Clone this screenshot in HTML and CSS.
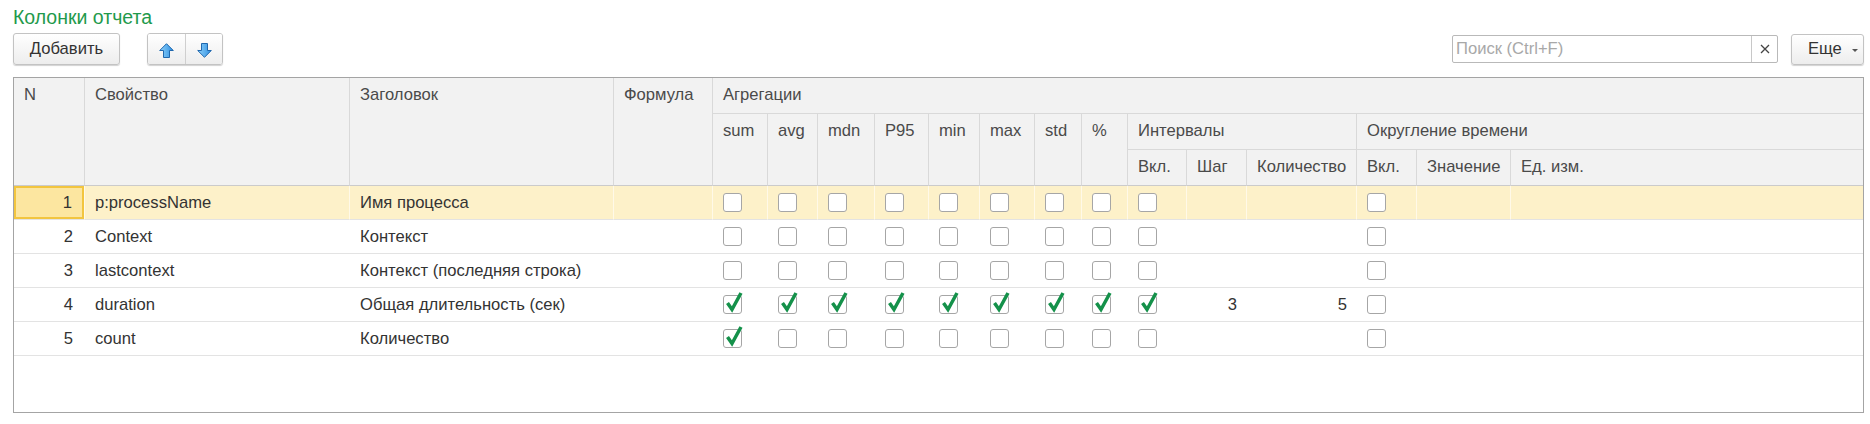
FILE: index.html
```html
<!DOCTYPE html>
<html lang="ru">
<head>
<meta charset="utf-8">
<title>Колонки отчета</title>
<link rel="stylesheet" href="styles.css">
</head>
<body>
<div class="page">
  <h1 class="title">Колонки отчета</h1>
  <div class="toolbar">
    <button class="btn btn-add" type="button">Добавить</button>
    <div class="btn-group">
      <button class="btn btn-icon" type="button">
        <svg class="arrow" width="15" height="15" viewBox="0 0 15 15"><defs><linearGradient id="gu" x1="0" y1="0" x2="1" y2="0"><stop offset="0" stop-color="#8fd2fb"/><stop offset="1" stop-color="#2f8fe0"/></linearGradient></defs><path d="M7.5 0.7 L14.3 7.5 L10.5 7.5 L10.5 14.5 L4.5 14.5 L4.5 7.5 L0.7 7.5 Z" fill="url(#gu)" stroke="#1f67ad" stroke-width="1" stroke-linejoin="miter"/></svg>
      </button>
      <button class="btn btn-icon" type="button">
        <svg class="arrow" width="15" height="15" viewBox="0 0 15 15"><defs><linearGradient id="gd" x1="0" y1="0" x2="1" y2="0"><stop offset="0" stop-color="#8fd2fb"/><stop offset="1" stop-color="#2f8fe0"/></linearGradient></defs><path d="M7.5 14.3 L14.3 7.5 L10.5 7.5 L10.5 0.5 L4.5 0.5 L4.5 7.5 L0.7 7.5 Z" fill="url(#gd)" stroke="#1f67ad" stroke-width="1" stroke-linejoin="miter"/></svg>
      </button>
    </div>
    <div class="spacer"></div>
    <div class="search">
      <span class="search-input">Поиск (Ctrl+F)</span>
      <span class="search-clear"><svg width="10" height="10" viewBox="0 0 10 10"><path d="M1 1 L9 9 M9 1 L1 9" stroke="#444" stroke-width="1.3"/></svg></span>
    </div>
    <button class="btn btn-more" type="button">Еще<span class="caret"></span></button>
  </div>

  <div class="grid">
    <table class="tbl">
      <colgroup>
        <col style="width:71px"><col style="width:265px"><col style="width:264px"><col style="width:99px">
        <col style="width:55px"><col style="width:50px"><col style="width:57px"><col style="width:54px">
        <col style="width:51px"><col style="width:55px"><col style="width:47px"><col style="width:46px">
        <col style="width:59px"><col style="width:60px"><col style="width:110px">
        <col style="width:60px"><col style="width:94px"><col style="width:352px">
      </colgroup>
      <thead>
        <tr>
          <th rowspan="3">N</th>
          <th rowspan="3">Свойство</th>
          <th rowspan="3">Заголовок</th>
          <th rowspan="3">Формула</th>
          <th colspan="14" class="nr">Агрегации</th>
        </tr>
        <tr>
          <th rowspan="2">sum</th>
          <th rowspan="2">avg</th>
          <th rowspan="2">mdn</th>
          <th rowspan="2">P95</th>
          <th rowspan="2">min</th>
          <th rowspan="2">max</th>
          <th rowspan="2">std</th>
          <th rowspan="2">%</th>
          <th colspan="3">Интервалы</th>
          <th colspan="3" class="nr">Округление времени</th>
        </tr>
        <tr>
          <th>Вкл.</th>
          <th>Шаг</th>
          <th>Количество</th>
          <th>Вкл.</th>
          <th>Значение</th>
          <th class="nr">Ед. изм.</th>
        </tr>
      </thead>
      <tbody>
        <tr class="sel">
          <td class="num"><span class="cur">1</span></td>
          <td>p:processName</td>
          <td>Имя процесса</td>
          <td></td>
          <td class="c"><span class="cb"></span></td><td class="c"><span class="cb"></span></td><td class="c"><span class="cb"></span></td><td class="c"><span class="cb"></span></td>
          <td class="c"><span class="cb"></span></td><td class="c"><span class="cb"></span></td><td class="c"><span class="cb"></span></td><td class="c"><span class="cb"></span></td>
          <td class="c"><span class="cb"></span></td><td class="r"></td><td class="r"></td>
          <td class="c"><span class="cb"></span></td><td></td><td class="nr"></td>
        </tr>
        <tr>
          <td class="num">2</td>
          <td>Context</td>
          <td>Контекст</td>
          <td></td>
          <td class="c"><span class="cb"></span></td><td class="c"><span class="cb"></span></td><td class="c"><span class="cb"></span></td><td class="c"><span class="cb"></span></td>
          <td class="c"><span class="cb"></span></td><td class="c"><span class="cb"></span></td><td class="c"><span class="cb"></span></td><td class="c"><span class="cb"></span></td>
          <td class="c"><span class="cb"></span></td><td class="r"></td><td class="r"></td>
          <td class="c"><span class="cb"></span></td><td></td><td></td>
        </tr>
        <tr>
          <td class="num">3</td>
          <td>lastcontext</td>
          <td>Контекст (последняя строка)</td>
          <td></td>
          <td class="c"><span class="cb"></span></td><td class="c"><span class="cb"></span></td><td class="c"><span class="cb"></span></td><td class="c"><span class="cb"></span></td>
          <td class="c"><span class="cb"></span></td><td class="c"><span class="cb"></span></td><td class="c"><span class="cb"></span></td><td class="c"><span class="cb"></span></td>
          <td class="c"><span class="cb"></span></td><td class="r"></td><td class="r"></td>
          <td class="c"><span class="cb"></span></td><td></td><td></td>
        </tr>
        <tr>
          <td class="num">4</td>
          <td>duration</td>
          <td>Общая длительность (сек)</td>
          <td></td>
          <td class="c"><span class="cb on"><svg viewBox="0 0 20 22"><path d="M3.5 11 L8 17.5 L17 1"/></svg></span></td>
          <td class="c"><span class="cb on"><svg viewBox="0 0 20 22"><path d="M3.5 11 L8 17.5 L17 1"/></svg></span></td>
          <td class="c"><span class="cb on"><svg viewBox="0 0 20 22"><path d="M3.5 11 L8 17.5 L17 1"/></svg></span></td>
          <td class="c"><span class="cb on"><svg viewBox="0 0 20 22"><path d="M3.5 11 L8 17.5 L17 1"/></svg></span></td>
          <td class="c"><span class="cb on"><svg viewBox="0 0 20 22"><path d="M3.5 11 L8 17.5 L17 1"/></svg></span></td>
          <td class="c"><span class="cb on"><svg viewBox="0 0 20 22"><path d="M3.5 11 L8 17.5 L17 1"/></svg></span></td>
          <td class="c"><span class="cb on"><svg viewBox="0 0 20 22"><path d="M3.5 11 L8 17.5 L17 1"/></svg></span></td>
          <td class="c"><span class="cb on"><svg viewBox="0 0 20 22"><path d="M3.5 11 L8 17.5 L17 1"/></svg></span></td>
          <td class="c"><span class="cb on"><svg viewBox="0 0 20 22"><path d="M3.5 11 L8 17.5 L17 1"/></svg></span></td>
          <td class="r">3</td><td class="r">5</td>
          <td class="c"><span class="cb"></span></td><td></td><td></td>
        </tr>
        <tr>
          <td class="num">5</td>
          <td>count</td>
          <td>Количество</td>
          <td></td>
          <td class="c"><span class="cb on"><svg viewBox="0 0 20 22"><path d="M3.5 11 L8 17.5 L17 1"/></svg></span></td>
          <td class="c"><span class="cb"></span></td><td class="c"><span class="cb"></span></td><td class="c"><span class="cb"></span></td>
          <td class="c"><span class="cb"></span></td><td class="c"><span class="cb"></span></td><td class="c"><span class="cb"></span></td><td class="c"><span class="cb"></span></td>
          <td class="c"><span class="cb"></span></td><td class="r"></td><td class="r"></td>
          <td class="c"><span class="cb"></span></td><td></td><td></td>
        </tr>
      </tbody>
    </table>
  </div>
</div>
</body>
</html>
```

FILE: styles.css
```css
* { box-sizing: border-box; }

html, body {
  margin: 0;
  padding: 0;
  background: #ffffff;
}

body {
  font-family: "Liberation Sans", Arial, sans-serif;
  font-size: 16.6px;
  color: #333333;
}

.page {
  padding: 6px 6px 0 13px;
  width: 1870px;
  height: 424px;
}

.title {
  margin: 0;
  font-size: 19.5px;
  font-weight: normal;
  line-height: 23px;
  height: 23px;
  color: #1f9a4c;
}

.toolbar {
  display: flex;
  align-items: center;
  margin-top: 4px;
  height: 32px;
}

.btn {
  font-family: "Liberation Sans", Arial, sans-serif;
  font-size: 16.6px;
  color: #333333;
  background: linear-gradient(#ffffff, #ededed);
  border: 1px solid #c3c3c3;
  border-radius: 3px;
  box-shadow: 0 1px 1px rgba(0, 0, 0, 0.18);
  height: 32px;
  padding: 0;
  margin: 0;
  display: flex;
  align-items: center;
  justify-content: center;
}

.btn-add {
  width: 107px;
}

.btn-group {
  display: flex;
  margin-left: 27px;
  border: 1px solid #c3c3c3;
  border-radius: 3px;
  box-shadow: 0 1px 1px rgba(0, 0, 0, 0.18);
  height: 32px;
  overflow: hidden;
}

.btn-group .btn-icon {
  border: none;
  border-radius: 0;
  box-shadow: none;
  width: 37px;
  height: 30px;
}

.btn-group .btn-icon + .btn-icon {
  border-left: 1px solid #cfcfcf;
}

.arrow {
  display: block;
  margin-top: 2px;
}

.spacer {
  flex: 1;
}

.search {
  display: flex;
  width: 326px;
  height: 28px;
  border: 1px solid #b9b9b9;
  border-radius: 2px;
  background: #ffffff;
}

.search-input {
  flex: 1;
  color: #a8a8a8;
  line-height: 26px;
  padding-left: 3px;
}

.search-clear {
  width: 26px;
  border-left: 1px solid #c8c8c8;
  display: flex;
  align-items: center;
  justify-content: center;
}

.btn-more {
  width: 73px;
  margin-left: 13px;
  height: 31px;
  justify-content: flex-start;
  padding-left: 16px;
}

.caret {
  display: inline-block;
  width: 0;
  height: 0;
  border-left: 3px solid transparent;
  border-right: 3px solid transparent;
  border-top: 3px solid #555555;
  margin-left: 10px;
  margin-top: 2px;
}

.grid {
  margin-top: 12px;
  width: 1851px;
  height: 336px;
  border: 1px solid #a4a4a4;
  overflow: hidden;
}

.tbl {
  table-layout: fixed;
  border-collapse: separate;
  border-spacing: 0;
  width: 1849px;
}

.tbl th {
  background: #f2f2f2;
  color: #4a4a4a;
  font-weight: normal;
  text-align: left;
  vertical-align: top;
  height: 36px;
  padding: 8px 4px 0 10px;
  line-height: 18px;
  border-right: 1px solid #d9d9d9;
  border-bottom: 1px solid #d9d9d9;
  white-space: nowrap;
  overflow: hidden;
}

.tbl thead tr:last-child th,
.tbl th[rowspan="3"],
.tbl th[rowspan="2"] {
  border-bottom-color: #cbcbcb;
}

.tbl th.nr {
  border-right: none;
}

.tbl td {
  height: 34px;
  padding: 0 10px;
  border-bottom: 1px solid #e3e3e3;
  vertical-align: middle;
  white-space: nowrap;
  overflow: visible;
  color: #333333;
}

.tbl td.num {
  text-align: right;
  padding-right: 12px;
}

.tbl td.r {
  text-align: right;
}

.tbl td.c {
  padding-left: 10px;
}

.tbl tr.sel td {
  background: #fdf1c9;
  border-right: 1px solid #fff9e8;
}

.tbl tr.sel td.nr {
  border-right: none;
}

.tbl tr.sel td.num {
  padding: 0;
}

.cur {
  display: block;
  height: 33px;
  line-height: 29px;
  text-align: right;
  padding-right: 10px;
  background: #fce6a0;
  border: 2px solid #f2c53f;
}

.cb {
  position: relative;
  display: block;
  width: 19px;
  height: 19px;
  border: 1px solid #a6a6a6;
  border-radius: 3px;
  background: #ffffff;
}

.cb svg {
  position: absolute;
  left: 0;
  top: -4px;
  width: 20px;
  height: 22px;
  overflow: visible;
}

.cb svg path {
  fill: none;
  stroke: #14914a;
  stroke-width: 3.5;
  stroke-linejoin: miter;
  stroke-linecap: butt;
}
```
